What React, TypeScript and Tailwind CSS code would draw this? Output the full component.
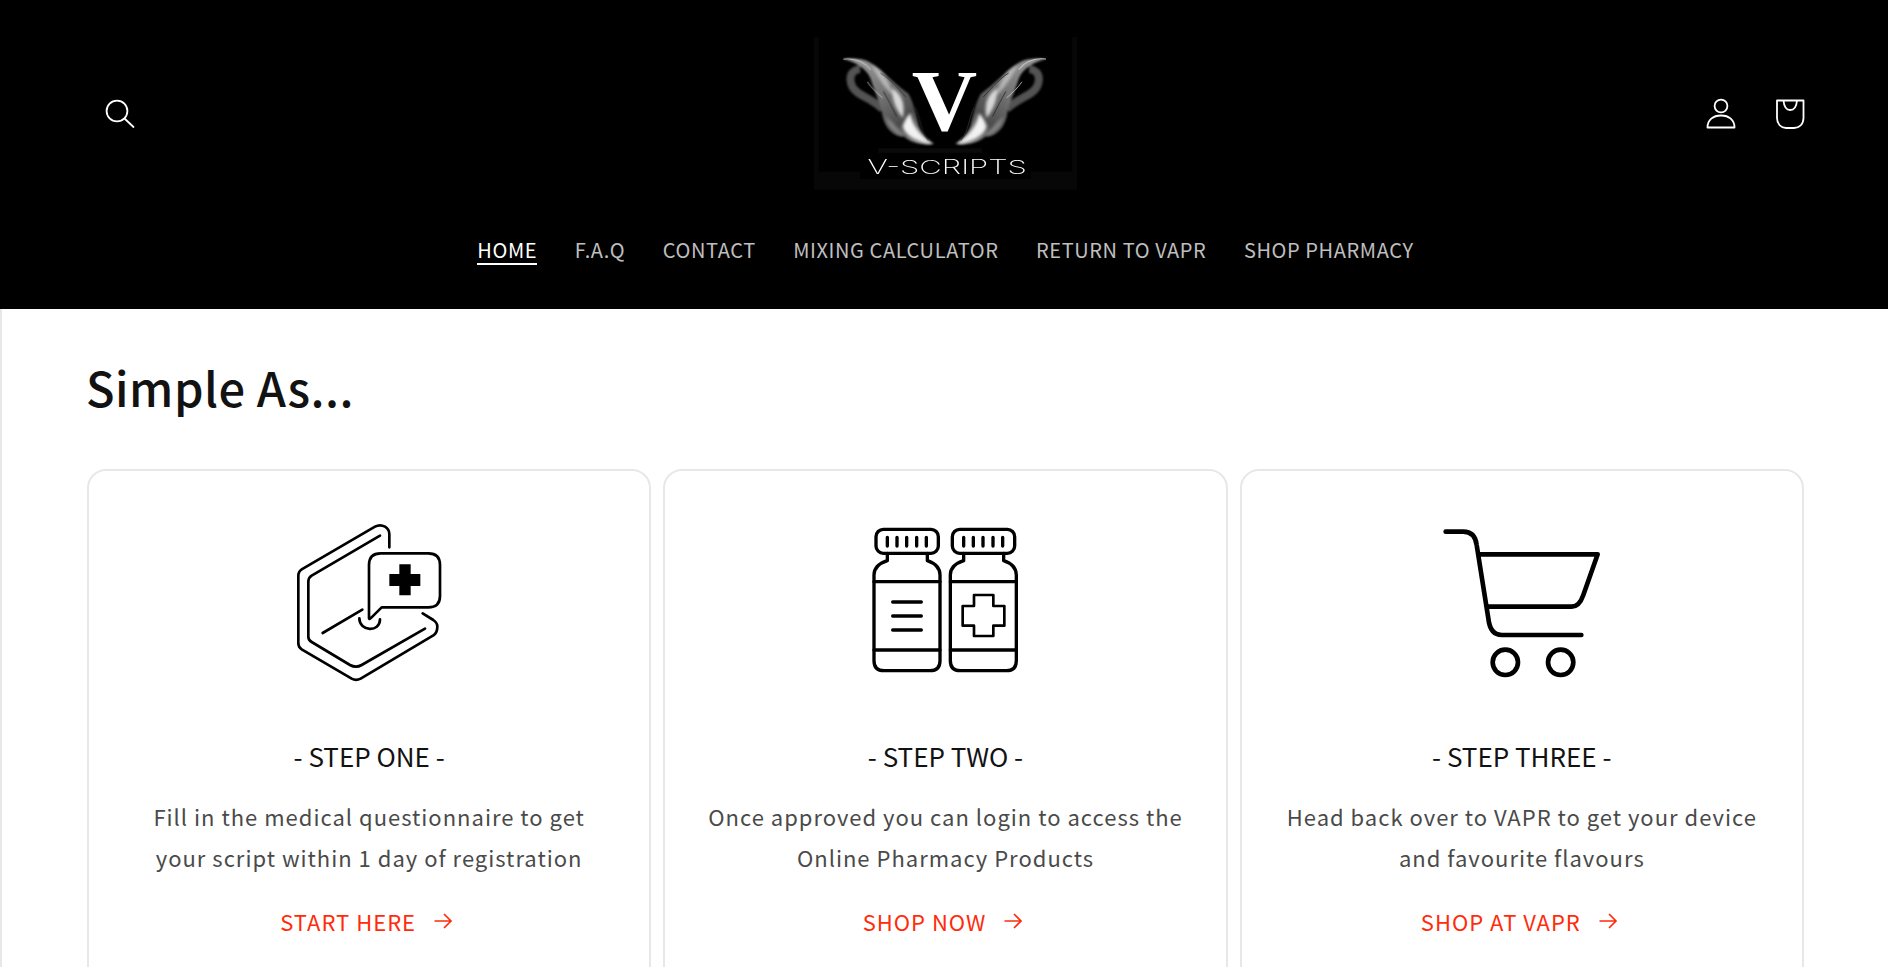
import { FC, ReactNode } from "react";

const FONT = "font-['Noto_Sans_CJK_SC','Noto_Sans',sans-serif]";

const navItems = ["HOME", "F.A.Q", "CONTACT", "MIXING CALCULATOR", "RETURN TO VAPR", "SHOP PHARMACY"];

const Wing: FC = () => (
  <g>
    <g filter="url(#soft)">
      <path d="M240 148 C200 152 205 200 235 220 C256 234 285 245 308 268" fill="none" stroke="#525252" strokeWidth="24" />
      <path d="M190 118 C222 114 248 118 266 126 C302 146 345 195 385 222 C402 250 408 290 416 320 C428 350 445 365 462 372 C430 378 390 368 372 350 C345 352 318 330 308 292 C302 250 284 218 272 178 C262 148 225 126 190 118 Z" fill="url(#wingLight)" />
    </g>
    <g filter="url(#softer)">
      <path d="M272 134 C305 150 325 175 340 228 C315 208 292 170 272 134 Z" fill="#c4c4c4" opacity="0.8" />
      <path d="M336 205 C364 222 376 250 368 294 C346 268 336 240 336 205 Z" fill="#e6e6e6" opacity="0.9" />
      <path d="M316 290 C335 302 350 325 375 348 C342 344 322 322 316 290 Z" fill="#8c8c8c" opacity="0.85" />
      <path d="M390 280 C398 315 415 345 456 371 C412 366 374 348 368 320 C372 303 380 292 390 280 Z" fill="#f2f2f2" />
    </g>
    <path d="M190 118 C222 114 250 122 272 150" fill="none" stroke="#c4c4c4" strokeWidth="3" />
    <path d="M262 186 C275 206 290 218 308 234" fill="none" stroke="#c4c4c4" strokeWidth="2.5" />
    <path d="M405 262 C422 295 420 330 445 362" fill="none" stroke="#2e2e2e" strokeWidth="2.5" />
    <path d="M378 232 C350 200 322 172 302 160" fill="none" stroke="#262626" strokeWidth="2.5" />
    <path d="M350 290 C335 262 325 240 310 215" fill="none" stroke="#2a2a2a" strokeWidth="2.5" />
  </g>
);

const Logo: FC = () => (
  <svg viewBox="102 52 788 458" className="h-[153px] w-[263px] shrink-0">
    <defs>
      <linearGradient id="wingLight" x1="190" y1="110" x2="460" y2="370" gradientUnits="userSpaceOnUse">
        <stop offset="0" stopColor="#a0a0a0" />
        <stop offset="0.4" stopColor="#787878" />
        <stop offset="0.7" stopColor="#4c4c4c" />
        <stop offset="1" stopColor="#a8a8a8" />
      </linearGradient>
      <filter id="soft">
        <feGaussianBlur stdDeviation="2.4" />
      </filter>
      <filter id="softer">
        <feGaussianBlur stdDeviation="4" />
      </filter>
    </defs>
    <rect x="102" y="52" width="788" height="458" fill="#070707" />
    <rect x="116" y="52" width="760" height="403" fill="#000" />
    <rect x="240" y="455" width="512" height="22" fill="#000" />
    <rect x="295" y="385" width="310" height="14" fill="#0a0a0a" />
    <Wing />
    <g transform="translate(987 0) scale(-1 1)">
      <Wing />
    </g>
    <text x="493" y="331" textAnchor="middle" fill="#fff" fontFamily="Liberation Serif" fontWeight="700" fontSize="262" textLength="196" lengthAdjust="spacingAndGlyphs">
      V
    </text>
    <text x="501" y="462" textAnchor="middle" fill="#fff" fontFamily="Inter" fontWeight="200" fontSize="58" textLength="478" lengthAdjust="spacingAndGlyphs">
      V-SCRIPTS
    </text>
  </svg>
);

const SearchIcon: FC = () => (
  <svg viewBox="0 0 32 32" className="h-8 w-8" fill="none" stroke="#fff" strokeWidth="1.8">
    <circle cx="13" cy="13" r="10.4" />
    <path d="M20.5 20.5 L29.5 29" strokeLinecap="round" />
  </svg>
);

const AccountIcon: FC = () => (
  <svg viewBox="0 0 30 32" className="h-8 w-[30px]" fill="none" stroke="#fff" strokeWidth="1.8">
    <circle cx="15" cy="8" r="6.4" />
    <path d="M1.5 29.5 C1.5 22 7 17.5 15 17.5 C23 17.5 28.5 22 28.5 29.5 Z" strokeLinejoin="round" />
  </svg>
);

const BagIcon: FC = () => (
  <svg viewBox="0 0 30 32" className="h-8 w-[30px]" fill="none" stroke="#fff" strokeWidth="1.8">
    <path d="M2 2.5 H28.5 V20 C28.5 26 24.5 30 19 30 H11 C6 30 2 26 2 20 Z" strokeLinejoin="round" />
    <path d="M8.5 2.5 C9 8.5 11.5 12 15.2 12 C19 12 21.5 8.5 22 2.5" />
  </svg>
);

const QuestionnaireIcon: FC = () => (
  <svg viewBox="0 0 600 540" className="ml-[2px] h-[180px] w-[200px]" fill="none" stroke="#000" strokeWidth="8" strokeLinecap="round" strokeLinejoin="round">
    <path d="M358 112 V72 Q358 58 345 50 Q330 42 315 50 L95 178 Q85 184 85 198 V400 Q85 412 95 418 L245 506 Q258 513 272 506 L490 376 Q502 368 502 350 Q502 338 490 330 L458 310" />
    <path d="M330 77 L125 197 Q115 203 115 215 V380 Q115 390 125 396 L240 465 Q258 475 275 465 L465 356" />
    <path d="M158 369 L277 299" />
    <path d="M268 325 C268 365 330 368 330 328" />
    <path d="M297 325 V165 Q297 130 332 130 H475 Q510 130 510 165 V258 Q510 292 475 292 H335 L307 320 Q297 330 297 325 Z" />
    <path d="M388 163 H422 V192 H451 V228 H422 V256 H388 V228 H358 V192 H388 Z" fill="#000" stroke="none" />
  </svg>
);

const Bottle: FC<{ x?: number; children: ReactNode }> = ({ x = 0, children }) => (
  <g transform={`translate(${x} 0)`}>
    <rect x="78" y="58" width="187" height="72" rx="22" />
    <path d="M112 82 V108 M141 82 V108 M170 82 V108 M200 82 V108 M229 82 V108" />
    <path d="M112 130 V152 Q72 165 72 195 V452 Q72 482 102 482 H240 Q270 482 270 452 V195 Q270 165 232 152 V130" />
    <path d="M72 215 H270 M72 420 H270" />
    {children}
  </g>
);

const BottlesIcon: FC = () => (
  <svg viewBox="0 0 600 540" className="ml-[10px] h-[180px] w-[200px]" fill="none" stroke="#000" strokeWidth="10" strokeLinecap="round" strokeLinejoin="round">
    <Bottle>
      <path d="M128 276 H214 M128 318 H214 M128 360 H214" />
    </Bottle>
    <Bottle x={229}>
      <path d="M143 255 H201 V288 H234 V347 H201 V378 H143 V347 H109 V288 H143 Z" strokeWidth="8" />
    </Bottle>
  </svg>
);

const CartIcon: FC = () => (
  <svg viewBox="0 0 600 540" className="mr-[4px] h-[180px] w-[200px]" fill="none" stroke="#000" strokeWidth="14" strokeLinecap="round" strokeLinejoin="round">
    <path d="M77 65 H130 Q165 65 170 105 L205 325 Q210 375 245 375 H484" />
    <path d="M178 133 H533 L490 255 Q478 290 455 290 H205" />
    <circle cx="256" cy="457" r="38" />
    <circle cx="422" cy="457" r="38" />
  </svg>
);

const ArrowIcon: FC = () => (
  <svg viewBox="0 0 18 16" className="h-4 w-[19px]" fill="none" stroke="#ff2b0a" strokeWidth="1.7">
    <path d="M0 8 H16.5 M9.5 1 L16.5 8 L9.5 15" />
  </svg>
);

interface CardProps {
  icon: ReactNode;
  title: string;
  lines: string[];
  link: string;
}

const Card: FC<CardProps> = ({ icon, title, lines, link }) => (
  <div className="flex flex-1 flex-col items-center rounded-[19px] border-2 border-[#e7e7e7] pt-[39px] pb-[80px]">
    {icon}
    <h3 className="mt-[46px] text-[26px] leading-[40px] text-[#121212]">{title}</h3>
    <p className="mt-[20px] text-center text-[22px] leading-[41px] tracking-[1px] text-[#4a4a4a]">
      {lines.map((line) => (
        <span key={line} className="block">
          {line}
        </span>
      ))}
    </p>
    <a className="mt-[27px] mr-[5px] flex items-center gap-[18px] text-[22px] leading-[32px] tracking-[1px] text-[#ff2b0a]">
      {link}
      <ArrowIcon />
    </a>
  </div>
);

const App: FC = () => {
  return (
    <div className={`h-screen overflow-hidden bg-white ${FONT}`}>
      <header className="h-[309px] bg-black pt-[37px] pr-[84px] pl-[87px]">
        <div className="grid grid-cols-[1fr_auto_1fr] items-center">
          <div className="pl-[17px]">
            <SearchIcon />
          </div>
          <Logo />
          <div className="-mr-[1px] flex items-center justify-end gap-[39px]">
            <AccountIcon />
            <BagIcon />
          </div>
        </div>
        <nav className="mt-[48px] flex justify-center gap-[37.5px] text-[20px] tracking-[0.6px] text-white/75">
          {navItems.map((item) => (
            <span key={item} className={item === "HOME" ? "h-[27px] border-b-2 border-white leading-[23px] text-white" : "h-[27px] leading-[23px]"}>
              {item}
            </span>
          ))}
        </nav>
      </header>
      <main className="border-l-2 border-[#e7e7e7] pl-[85px] pr-[84px]">
        <h2 className="-ml-[1px] pt-[43px] text-[47px] leading-[70px] font-medium tracking-[0.5px] text-[#121212]">Simple As...</h2>
        <div className="mt-[47px] flex gap-[12px]">
          <Card icon={<QuestionnaireIcon />} title="- STEP ONE -" lines={["Fill in the medical questionnaire to get", "your script within 1 day of registration"]} link="START HERE" />
          <Card icon={<BottlesIcon />} title="- STEP TWO -" lines={["Once approved you can login to access the", "Online Pharmacy Products"]} link="SHOP NOW" />
          <Card icon={<CartIcon />} title="- STEP THREE -" lines={["Head back over to VAPR to get your device", "and favourite flavours"]} link="SHOP AT VAPR" />
        </div>
      </main>
    </div>
  );
};

export default App;
